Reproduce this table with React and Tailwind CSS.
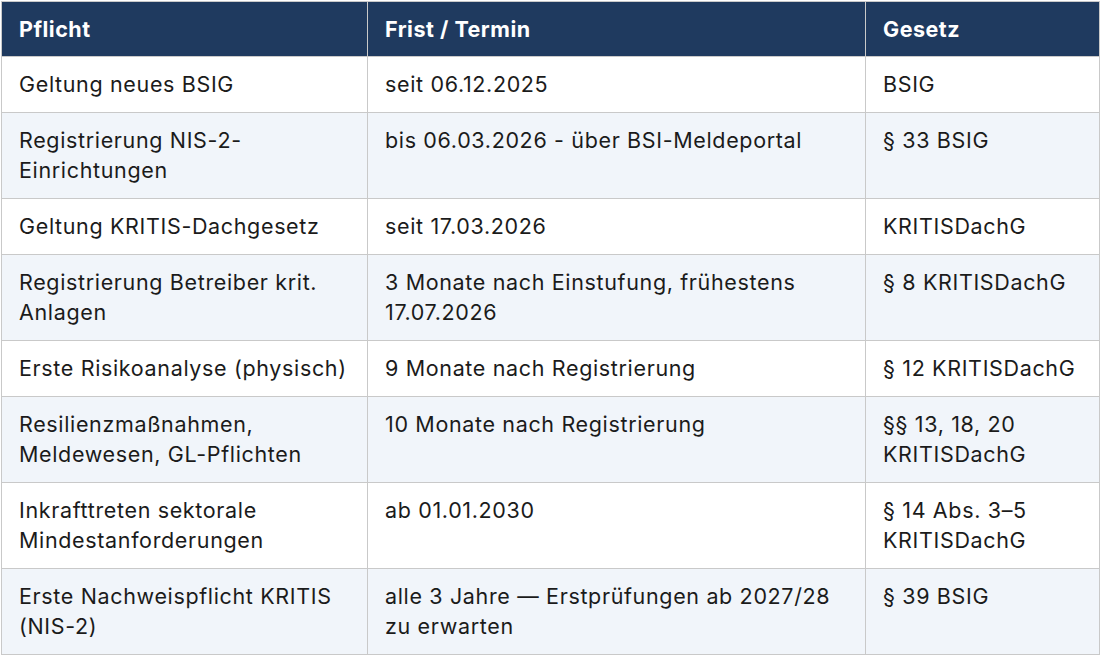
const rows = [
    { pflicht: ['Geltung neues BSIG'], frist: ['seit 06.12.2025'], gesetz: ['BSIG'] },
    { pflicht: ['Registrierung NIS-2-', 'Einrichtungen'], frist: ['bis 06.03.2026 - über BSI-Meldeportal'], gesetz: ['§ 33 BSIG'] },
    { pflicht: ['Geltung KRITIS-Dachgesetz'], frist: ['seit 17.03.2026'], gesetz: ['KRITISDachG'] },
    { pflicht: ['Registrierung Betreiber krit.', 'Anlagen'], frist: ['3 Monate nach Einstufung, frühestens', '17.07.2026'], gesetz: ['§ 8 KRITISDachG'] },
    { pflicht: ['Erste Risikoanalyse (physisch)'], frist: ['9 Monate nach Registrierung'], gesetz: ['§ 12 KRITISDachG'] },
    { pflicht: ['Resilienzmaßnahmen,', 'Meldewesen, GL-Pflichten'], frist: ['10 Monate nach Registrierung'], gesetz: ['§§ 13, 18, 20', 'KRITISDachG'] },
    { pflicht: ['Inkrafttreten sektorale', 'Mindestanforderungen'], frist: ['ab 01.01.2030'], gesetz: ['§ 14 Abs. 3–5', 'KRITISDachG'] },
    { pflicht: ['Erste Nachweispflicht KRITIS', '(NIS-2)'], frist: ['alle 3 Jahre — Erstprüfungen ab 2027/28', 'zu erwarten'], gesetz: ['§ 39 BSIG'] },
];

function Lines({ lines }) {
    return lines.map((l, i) => (
        <span key={i} className="block whitespace-nowrap">{l}</span>
    ));
}

export default function App() {
    return (
        <div className="w-[1100px] h-[656px] bg-white p-px" style={{ fontFamily: "Inter, 'Liberation Sans', sans-serif" }}>
            <table className="w-[1098px] table-fixed border-collapse border border-[#c9c9c9] text-[21.5px] leading-[30px] tracking-[0.65px] text-[#1b1b1b]">
                <colgroup>
                    <col className="w-[366px]" />
                    <col className="w-[498px]" />
                    <col className="w-[234px]" />
                </colgroup>
                <thead>
                    <tr className="bg-[#1f3a5f] text-white">
                        {['Pflicht', 'Frist / Termin', 'Gesetz'].map((h) => (
                            <th key={h} className="border border-[#c9c9c9] px-[17px] pt-[12px] pb-[12px] text-left font-bold tracking-[0.5px]">{h}</th>
                        ))}
                    </tr>
                </thead>
                <tbody>
                    {rows.map((r, i) => (
                        <tr key={i} className={i % 2 === 1 ? 'bg-[#f1f5fa]' : 'bg-white'}>
                            <td className="border border-[#c9c9c9] px-[17px] pt-[12px] pb-[13px] align-top"><Lines lines={r.pflicht} /></td>
                            <td className="border border-[#c9c9c9] px-[17px] pt-[12px] pb-[13px] align-top"><Lines lines={r.frist} /></td>
                            <td className="border border-[#c9c9c9] px-[17px] pt-[12px] pb-[13px] align-top"><Lines lines={r.gesetz} /></td>
                        </tr>
                    ))}
                </tbody>
            </table>
        </div>
    );
}
